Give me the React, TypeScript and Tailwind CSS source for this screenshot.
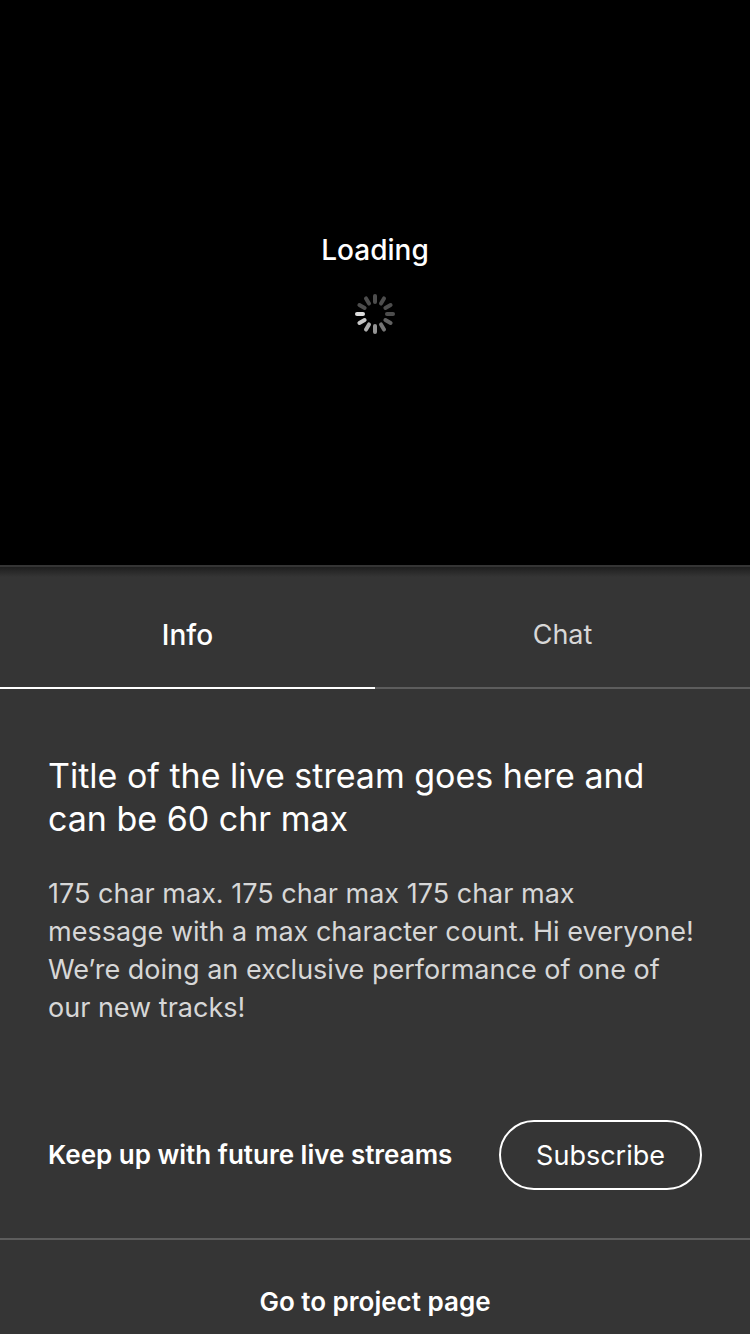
const spokes = [0.3, 0.3, 0.3, 0.3, 0.38, 0.46, 0.58, 0.68, 0.78, 0.87, 0.3, 0.3];

function Spinner() {
  return (
    <svg className="size-10" viewBox="0 0 40 40" role="img" aria-label="Loading">
      {spokes.map((opacity, i) => (
        <line
          key={i}
          x1="20"
          y1="2"
          x2="20"
          y2="8"
          stroke="#fff"
          strokeOpacity={opacity}
          strokeWidth="4"
          strokeLinecap="round"
          transform={`rotate(${i * 30} 20 20)`}
        />
      ))}
    </svg>
  );
}

export default function App() {
  return (
    <main className="flex min-h-screen flex-col bg-[#353535] font-['Inter',sans-serif] text-white">
      <section className="flex h-[565px] flex-col items-center gap-6 bg-black pt-[230px]">
        <p className="text-[28px] leading-10 font-medium">Loading</p>
        <Spinner />
      </section>

      <div className="h-3 border-t-2 border-[#353535] bg-linear-to-b from-[#1f1f1f] to-[#353535]" />

      <div role="tablist" className="grid grid-cols-2 leading-10">
        <button role="tab" aria-selected="true" className="border-b-2 border-white pt-[38px] pb-8 text-[28px] font-medium">
          Info
        </button>
        <button role="tab" aria-selected="false" className="border-b-2 border-[#5d5d5d] pt-[38px] pb-8 text-[27px] text-[#d7d7d7]">
          Chat
        </button>
      </div>

      <section className="px-12 pt-[65px]">
        <h1 className="text-[34px] leading-[43px]">Title of the live stream goes here and can be 60 chr max</h1>
        <p className="mt-[35px] text-[27px] leading-[38px] text-[#d7d7d7]">
          175 char max. 175 char max 175 char max
          <br />
          message with a max character count. Hi everyone! We’re doing an exclusive performance of one of our new
          tracks!
        </p>
      </section>

      <section className="mt-[93px] flex items-center justify-between px-12 pb-12">
        <p className="text-[26px] leading-9 font-semibold">Keep up with future live streams</p>
        <button className="rounded-full border-2 border-white px-[35px] pt-[14px] pb-3 text-[27px] leading-10">Subscribe</button>
      </section>

      <a href="#project" className="border-t-2 border-[#5d5d5d] pt-11 pb-3 text-center text-[26px] leading-9 font-semibold">
        Go to project page
      </a>
    </main>
  );
}
